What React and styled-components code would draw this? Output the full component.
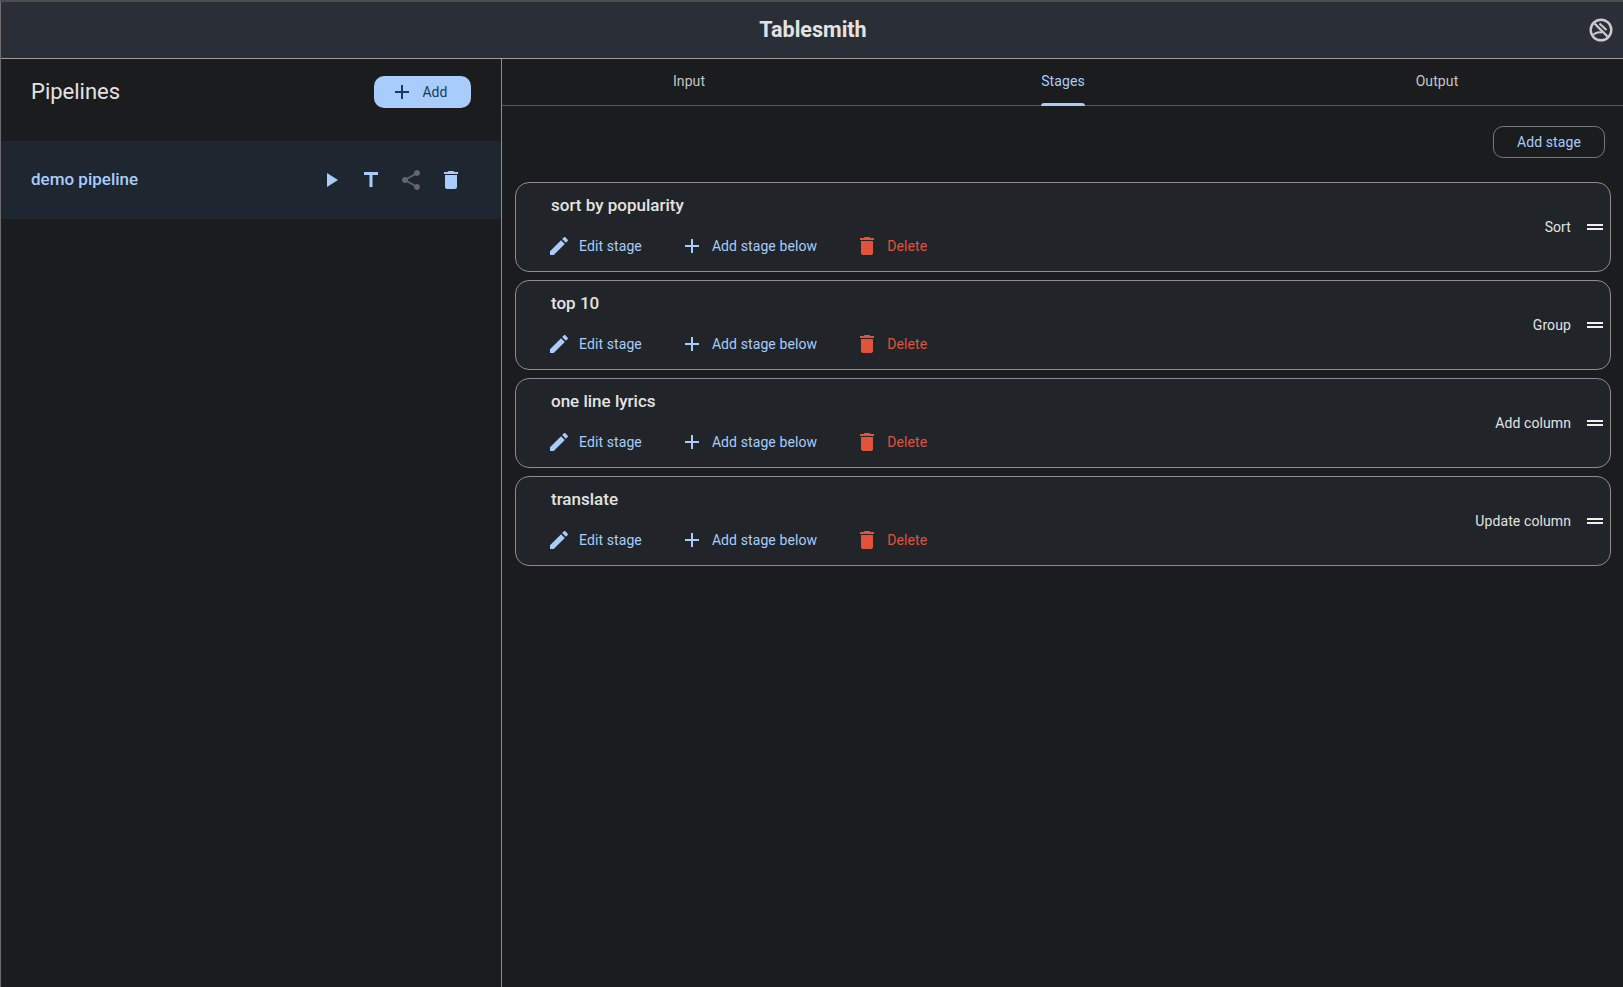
import React from 'react';
import styled, { createGlobalStyle } from 'styled-components';

const Global = createGlobalStyle`
  html, body { margin: 0; padding: 0; height: 100%; background: #1a1c1e; }
  body { font-family: Roboto, "Liberation Sans", sans-serif; overflow: hidden; }
  * { box-sizing: border-box; }
`;
const P = {
  play: 'M8 5v14l11-7z',
  title: 'M5 4v3h5.5v12h3V7H19V4z',
  share: 'M18 16.08c-.76 0-1.44.3-1.96.77L8.91 12.7c.05-.23.09-.46.09-.7s-.04-.47-.09-.7l7.05-4.11c.54.5 1.25.81 2.04.81 1.66 0 3-1.34 3-3s-1.34-3-3-3-3 1.34-3 3c0 .24.04.47.09.7L8.04 9.81C7.5 9.31 6.79 9 6 9c-1.66 0-3 1.34-3 3s1.34 3 3 3c.79 0 1.5-.31 2.04-.81l7.12 4.16c-.05.21-.08.43-.08.65 0 1.61 1.31 2.92 2.92 2.92s2.92-1.31 2.92-2.92-1.31-2.92-2.92-2.92z',
  del: 'M6 19c0 1.1.9 2 2 2h8c1.1 0 2-.9 2-2V7H6v12zM19 4h-3.5l-1-1h-5l-1 1H5v2h14V4z',
  edit: 'M3 17.25V21h3.75L17.81 9.94l-3.75-3.75L3 17.25zM20.71 7.04c.39-.39.39-1.02 0-1.41l-2.34-2.34c-.39-.39-1.02-.39-1.41 0l-1.83 1.83 3.75 3.75 1.83-1.83z',
  add: 'M19 13h-6v6h-2v-6H5v-2h6V5h2v6h6v2z',
  drag: 'M20 9H4v2h16V9zM4 15h16v-2H4v2z',
};
const Icon = ({ d, color, size = 24 }) => (
  <svg width={size} height={size} viewBox="0 0 24 24" fill={color} style={{ flex: 'none', display: 'block' }}><path d={d} /></svg>
);

const Page = styled.div`
  height: 987px; display: flex; flex-direction: column;
  border-top: 2px solid #4a4d50; border-left: 1px solid #6a6c70; color: #e3e3e3;
`;
const Header = styled.header`
  height: 57px; flex: none; display: flex; align-items: center; justify-content: center; position: relative;
  background: #2a2f37; border-bottom: 1px solid #9b9da0; padding-left: 2px;
`;
const Brand = styled.h1`
  margin: 0; font-size: 21.5px; font-weight: 700; color: #e3e3e3; line-height: 1;
`;
const Logo = styled.svg`
  position: absolute; right: 10px; top: 16px; width: 24px; height: 24px;
`;
const Body = styled.div`
  flex: 1; display: flex; min-height: 0;
`;
const Side = styled.aside`
  width: 501px; flex: none; border-right: 1px solid #8b8d90;
`;
const SideHead = styled.div`
  height: 82px; padding: 17px 30px 0 30px; display: flex; justify-content: space-between; align-items: flex-start;
`;
const SideTitle = styled.h2`
  margin: 0; font-size: 22px; font-weight: 400; line-height: 32px; color: #e3e3e3;
`;
const AddBtn = styled.button`
  width: 97px; height: 32px; border: 0; border-radius: 10px; background: #a8cdfc; color: #1c3a5e;
  font: 400 14px Roboto, sans-serif; letter-spacing: .1px; display: flex; align-items: center; justify-content: center; gap: 8px; padding: 0 7px 0 0;
`;
const PipeRow = styled.div`
  height: 78px; background: #1e262f; display: flex; align-items: center; padding: 0 30px;
`;
const PipeName = styled.div`
  flex: 1; font-size: 17px; font-weight: 500; color: #a8cdfc; padding-bottom: 2px;
`;
const IconBtns = styled.div`
  display: flex; gap: 0; margin-right: 0;
`;
const IconBtn = styled.span`
  width: 40px; height: 40px; display: flex; align-items: center; justify-content: center;
`;
const Main = styled.main`
  flex: 1; min-width: 0;
`;
const Tabs = styled.nav`
  height: 47px; display: grid; grid-template-columns: repeat(3, 1fr); column-gap: 2px; padding-left: 1px; border-bottom: 1px solid #55585b;
`;
const Tab = styled.div`
  display: flex; justify-content: center; align-items: center; font-size: 14px; letter-spacing: .1px;
  color: ${p => (p.$active ? '#a8cdfc' : '#c4c6c9')};
`;
const TabLabel = styled.span`
  position: relative; height: 100%; display: flex; align-items: center; padding-bottom: 3px;
  ${p => p.$active && `&::after { content: ''; position: absolute; left: 0; right: 0; bottom: -1px; height: 3px; border-radius: 3px 3px 0 0; background: #a8cdfc; }`}
`;
const Content = styled.div`
  padding: 20px 12px 0 13px; display: flex; flex-direction: column;
`;
const OutlineBtn = styled.button`
  align-self: flex-end; width: 112px; height: 32px; margin-right: 6px; margin-bottom: 24px; background: transparent;
  border: 1px solid #75787c; border-radius: 10px; color: #a8cdfc; font: 400 14px Roboto, sans-serif; letter-spacing: .1px; padding: 0;
`;
const Stages = styled.div`
  display: flex; flex-direction: column; gap: 8px;
`;
const Card = styled.div`
  height: 90px; border: 1px solid #8b8d90; border-radius: 14px; background: #212428;
  display: flex; align-items: center; justify-content: space-between; padding: 0 3px 0 35px;
`;
const Left = styled.div`
  display: flex; flex-direction: column; padding-bottom: 4px;
`;
const StageName = styled.div`
  font-size: 17px; font-weight: 500; line-height: 24px; color: #e3e3e3; margin-bottom: 17px;
`;
const Actions = styled.div`
  display: flex; margin-left: -4px;
`;
const Action = styled.span`
  display: flex; align-items: center; gap: 8px; font-size: 14px; letter-spacing: .1px; line-height: 24px; margin-right: ${p => p.$mr}px;
  color: ${p => p.$color};
`;
const Right = styled.div`
  display: flex; align-items: center; gap: 12px; font-size: 14px; letter-spacing: .1px; color: #e3e3e3;
`;

const stages = [
  ['sort by popularity', 'Sort'],
  ['top 10', 'Group'],
  ['one line lyrics', 'Add column'],
  ['translate', 'Update column'],
];

export default function App() {
  return (
    <Page>
      <Global />
      <Header>
        <Brand>Tablesmith</Brand>
        <Logo viewBox="0 0 24 24" fill="none" stroke="#c9cbce" strokeWidth="2.4">
          <circle cx="12" cy="12" r="10.3" />
          <path d="M5.5 5.5l13 13" />
          <path d="M10.5 5.5l7 6.5" strokeWidth="2.2" />
          <path d="M4.5 16.5c3-2.2 6-2.6 8.5-2" strokeWidth="2" />
        </Logo>
      </Header>
      <Body>
        <Side>
          <SideHead>
            <SideTitle>Pipelines</SideTitle>
            <AddBtn><Icon d={P.add} color="#1c3a5e" />Add</AddBtn>
          </SideHead>
          <PipeRow>
            <PipeName>demo pipeline</PipeName>
            <IconBtns>
              <IconBtn><Icon d={P.play} color="#a8cdfc" /></IconBtn>
              <IconBtn><Icon d={P.title} color="#a8cdfc" /></IconBtn>
              <IconBtn><Icon d={P.share} color="#63676b" /></IconBtn>
              <IconBtn><Icon d={P.del} color="#a8cdfc" /></IconBtn>
            </IconBtns>
          </PipeRow>
        </Side>
        <Main>
          <Tabs>
            <Tab><TabLabel>Input</TabLabel></Tab>
            <Tab $active><TabLabel $active>Stages</TabLabel></Tab>
            <Tab><TabLabel>Output</TabLabel></Tab>
          </Tabs>
          <Content>
            <OutlineBtn>Add stage</OutlineBtn>
            <Stages>
              {stages.map(([name, type]) => (
                <Card key={name}>
                  <Left>
                    <StageName>{name}</StageName>
                    <Actions>
                      <Action $color="#a8cdfc" $mr={38}><Icon d={P.edit} color="#a8cdfc" />Edit stage</Action>
                      <Action $color="#a8cdfc" $mr={38}><Icon d={P.add} color="#a8cdfc" />Add stage below</Action>
                      <Action $color="#e2533b"><Icon d={P.del} color="#e2533b" />Delete</Action>
                    </Actions>
                  </Left>
                  <Right>{type}<Icon d={P.drag} color="#f0f0f0" /></Right>
                </Card>
              ))}
            </Stages>
          </Content>
        </Main>
      </Body>
    </Page>
  );
}
